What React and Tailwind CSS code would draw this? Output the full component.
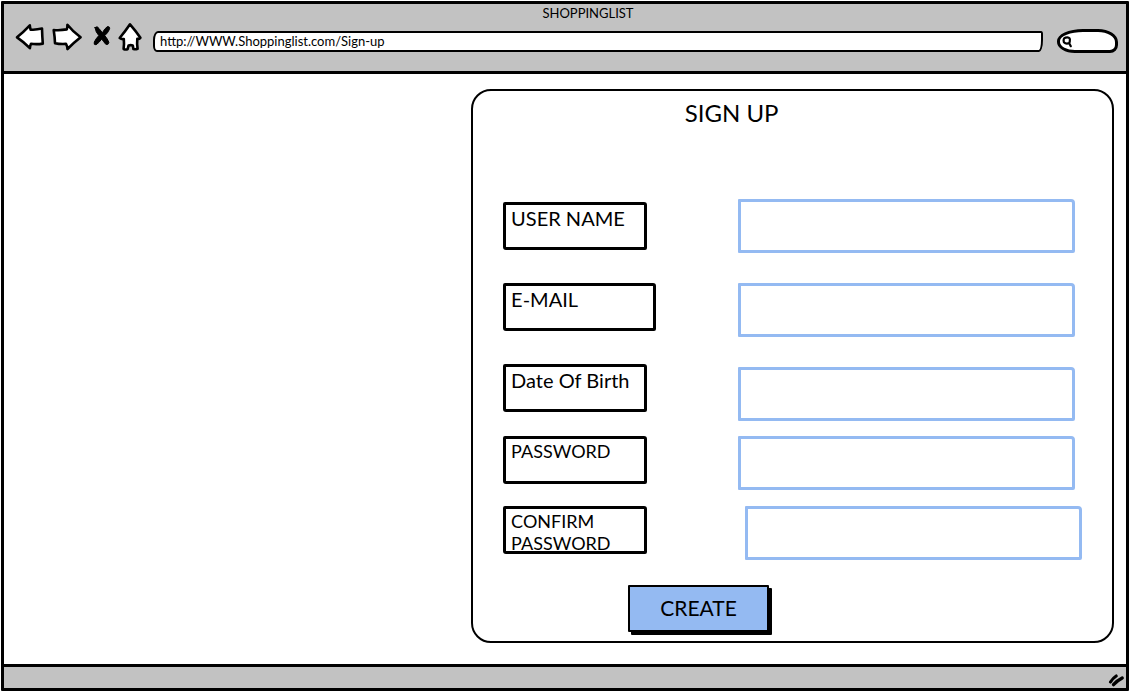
import React from 'react';

const FRAME = 'border-[3px] border-black';
const SMALL_LABEL = 'text-lg leading-[22px]';
const LARGE_LABEL = 'text-xl leading-6';

const FIELDS = [
  { id: 'username', label: 'USER NAME', type: 'text', row: 'mb-[30px] items-center', text: LARGE_LABEL, box: 'w-36', input: '' },
  { id: 'email', label: 'E-MAIL', type: 'email', row: 'mb-[27px] items-start', text: LARGE_LABEL, box: 'w-[153px]', input: '' },
  { id: 'birth', label: 'Date Of Birth', type: 'text', row: 'mb-[15px] items-start', text: LARGE_LABEL, box: 'w-36', input: 'mt-[3px]' },
  { id: 'password', label: 'PASSWORD', type: 'password', row: 'mb-4 items-start', text: SMALL_LABEL, box: 'w-36', input: '' },
  { id: 'confirm', label: 'CONFIRM PASSWORD', type: 'password', row: 'mb-[25px] items-start', text: SMALL_LABEL, box: 'w-36', input: 'ml-[7px] -mr-[7px]' },
];

function Icon({ viewBox, className, children }) {
  return (
    <svg viewBox={viewBox} className={`block h-[31px] overflow-visible ${className}`} fill="#fff" stroke="#000" strokeWidth="2.6" strokeLinejoin="round" strokeLinecap="round" aria-hidden="true">
      {children}
    </svg>
  );
}

function Toolbar() {
  return (
    <div className="flex items-end pr-2 pl-[11px]">
      <nav className="flex gap-1" aria-label="Browser">
        <button type="button" aria-label="Back">
          <Icon viewBox="15 22 32 31" className="w-8">
            <path d="M17 37.3 Q23 32.5 29.8 25.3 Q30 27.5 30.6 29.6 Q36 30 42 28.6 Q42.2 36 42.8 43.6 Q37 44.6 31 43.8 Q30 46 29.9 48.2 Q24 42 17 37.3Z" />
          </Icon>
        </button>
        <button type="button" aria-label="Forward">
          <Icon viewBox="51 22 32 31" className="w-8">
            <path d="M53.7 30 Q60 30.6 66.8 29.4 Q67.6 27 67.4 24.8 Q73 31.8 80.6 37.3 Q74 42.5 67.5 49 Q67.2 46 66 43.9 Q60 44.3 55 43.2 Q54.8 37 53.7 30Z" />
          </Icon>
        </button>
        <button type="button" aria-label="Stop">
          <Icon viewBox="87 22 28 31" className="w-7">
            <path fill="#000" strokeWidth="1" d="M95 27.5 Q97.5 25.5 99 28.5 L102.4 32.8 Q104.5 28.5 107.5 26.5 Q110.5 26.5 109.4 29.5 Q107.8 33 104.8 35.6 Q107.6 39 108.9 42.3 Q108.5 45.3 105.8 44.3 Q103.4 41.5 101.7 39 Q99.2 42.7 96 44.8 Q93.4 45 94.3 42 Q96 38.5 98.8 35.6 Q95.5 32 95 27.5Z" />
          </Icon>
        </button>
        <button type="button" aria-label="Home">
          <Icon viewBox="119 22 24 31" className="w-6">
            <path d="M130 24.3 Q135.5 30.5 140.4 37.8 Q139 39.3 137.3 38.8 Q136.8 44 137.6 48.8 Q135.5 49.6 133.4 49 L132.8 45.4 Q130.8 44.8 128.6 45.4 L127.6 49.2 Q125.5 49.8 123.6 49 Q124.3 44 123.8 39 Q121.5 39.4 119.7 38 Q125.5 31 130 24.3Z" />
          </Icon>
        </button>
      </nav>
      <input
        aria-label="Address"
        defaultValue="http://WWW.Shoppinglist.com/Sign-up"
        className="mb-px ml-2.5 h-[21px] min-w-0 flex-1 rounded-[5px_2px_4px_4px/9px_3px_12px_6px] border-2 border-black bg-white pb-0.5 pl-[5px] text-[13px] leading-4 outline-none"
      />
      <div className="ml-3.5 flex h-6 w-[61px] items-center rounded-[26px_20px_8px_18px/12px_13px_8px_11px] border-[3px] border-black bg-white pl-px">
        <svg viewBox="0 0 12 14" className="h-3.5 w-3 shrink-0" fill="none" stroke="#000" strokeWidth="2.2" strokeLinecap="round" aria-hidden="true">
          <path d="M8.4 9 Q5 10.4 2.9 8.2 Q1.8 4.4 4.6 3.6 Q8.8 2.8 8.9 5.4 Q9 7.6 8.2 9.2 L9.8 12.2" />
        </svg>
        <input aria-label="Search" className="min-w-0 flex-1 bg-transparent text-[13px] leading-4 outline-none" />
      </div>
    </div>
  );
}

function SignUpForm() {
  return (
    <form onSubmit={(e) => e.preventDefault()} className="mt-[15px] mr-3 mb-5 ml-auto w-[57.3%] rounded-[20px] border-2 border-black bg-white pt-1.5 pr-[37px] pb-[9px] pl-[30px]">
      <h1 className="mb-[70px] pr-[115px] text-center text-2xl leading-8">SIGN UP</h1>
      {FIELDS.map((f) => (
        <div key={f.id} className={`grid grid-cols-[235px_minmax(0,1fr)] ${f.row}`}>
          <label htmlFor={f.id} className={`block h-12 rounded-[2px_3px_2px_3px] bg-white pt-px pr-2 pl-[5px] ${FRAME} ${f.text} ${f.box}`}>
            {f.label}
          </label>
          <input id={f.id} type={f.type} className={`h-[54px] rounded-[1px_4px_2px_1px] border-[3px] border-[#94baf2] bg-white px-2 text-xl outline-none ${f.input}`} />
        </div>
      ))}
      <div className="flex pl-[125px]">
        <button type="submit" className="h-[47px] w-[141px] rounded-[1px] border-2 border-black bg-[#94baf2] pb-0.5 text-[21px] leading-6 shadow-[3px_3px_0_#000]">
          CREATE
        </button>
      </div>
    </form>
  );
}

export default function App() {
  return (
    <div className="flex min-h-screen flex-col bg-white px-px pt-px pb-0.5 font-['Lato',sans-serif] text-black">
      <div className={`flex flex-1 flex-col rounded-[1px] ${FRAME}`}>
        <header className="border-b-[3px] border-black bg-[#c2c2c2] pb-[18px]">
          <p className="pl-[46px] text-center text-[13px] leading-[18px]">SHOPPINGLIST</p>
          <Toolbar />
        </header>
        <main className="flex flex-1 items-start">
          <SignUpForm />
        </main>
        <footer className="flex justify-end border-t-[3px] border-black bg-[#c2c2c2]">
          <svg viewBox="1106 667 20 21" className="block h-[21px] w-5" fill="none" stroke="#000" strokeLinecap="round" aria-hidden="true">
            <path strokeWidth="3.2" d="M1110.5 682 Q1113 678 1116.2 676" />
            <path strokeWidth="3.4" d="M1113.5 684.6 Q1117.5 680.4 1122.2 678" />
          </svg>
        </footer>
      </div>
    </div>
  );
}
